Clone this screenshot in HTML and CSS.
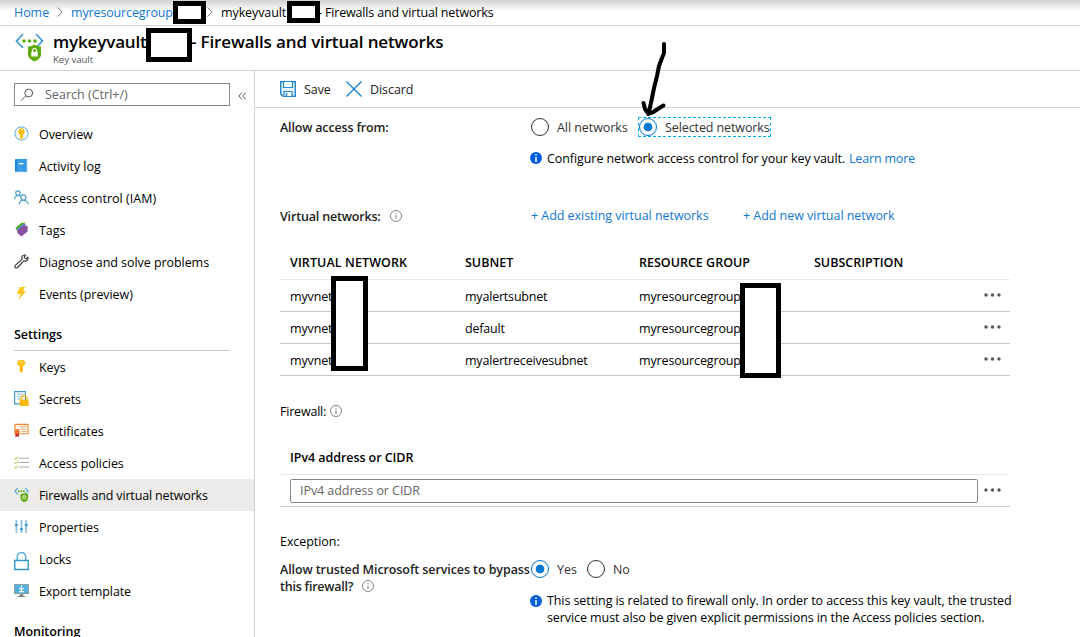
FILE: index.html
```html
<!DOCTYPE html>
<html lang="en">
<head>
<meta charset="utf-8">
<title>mykeyvault - Firewalls and virtual networks</title>
<link rel="stylesheet" href="styles.css">
</head>
<body>
<div class="page">
  <nav class="crumbs">
    <a class="crumb-home">Home</a>
    <svg class="chev" viewBox="0 0 6 10"><path d="M.7.5 5.2 5 .7 9.500"/></svg>
    <a class="crumb-group">myresourcegroup</a>
    <svg class="chev chev-two" viewBox="0 0 6 10"><path d="M.7.5 5.2 5 .7 9.500"/></svg>
    <span class="crumb-vault">mykeyvault</span>
    <span class="crumb-end">- Firewalls and virtual networks</span>
  </nav>
  <header class="head">
    <svg class="head-icon" viewBox="0 0 30 30"><path d="M8 1 1.500 8 8 15M21 1l6.500 7-6.500 7" fill="none" stroke="#3a9ad0" stroke-width="1.700"/><g fill="#5cab0b"><circle cx="9" cy="8" r="1.800"/><circle cx="14.500" cy="8" r="1.800"/><circle cx="20" cy="8" r="1.800"/><path d="M13 13.500q4 0 6.500-2 2.500 2 6.500 2v8q0 4-6.500 7-6.500-3-6.500-7z"/></g><path d="M17.500 19v-1.500a2 2 0 0 1 4 0V19" fill="none" stroke="#fff" stroke-width="1.200"/><path d="M16.300 18.800h6.400v4.700h-6.400z" fill="#fff"/></svg>
    <div>
      <h1 class="title"><span class="title-name">mykeyvault</span><span class="title-rest">- Firewalls and virtual networks</span></h1>
      <div class="subtitle">Key vault</div>
    </div>
  </header>
  <div class="body">
    <aside class="side">
      <div class="searchrow">
        <div class="search">
          <svg viewBox="0 0 14 14"><circle cx="8.700" cy="5" r="3.900"/><path d="M5.900 7.800 1 12.700"/></svg>
          <span class="t-search">Search (Ctrl+/)</span>
        </div>
        <svg class="collapse" viewBox="0 0 9 8"><path d="M4 .5.800 4 4 7.500M8 .5 4.800 4 8 7.500"/></svg>
      </div>
      <ul class="menu">
        <li><svg viewBox="0 0 16 16"><circle cx="8" cy="8" r="7" fill="#fff" stroke="#4da3d8"/><path d="M8 2a3.800 3.800 0 0 1 1.700 7V13L8 14.500 6.300 13V9A3.800 3.800 0 0 1 8 2z" fill="#fdbf12"/><path d="M7 3.800h2" stroke="#fff"/></svg><span class="t-overview">Overview</span></li>
        <li><svg viewBox="0 0 16 16"><path d="M2 1h12v14H2q-1-.2-1-1.500v-11Q1 1 2 1z" fill="#1f83d3"/><path d="M3 1h9.500v13H3z" fill="#359be6"/><path d="M13.500 1.500v13.200H2" fill="none" stroke="#9fd0ef" stroke-width=".8"/><path d="M5 6h5" stroke="#fff" stroke-width="1.500"/></svg><span class="t-activity">Activity log</span></li>
        <li><svg viewBox="0 0 16 16"><g fill="none" stroke="#4b9ec6" stroke-width="1.200"><circle cx="4.200" cy="3.300" r="2.400"/><path d="M.7 10q.2-4 3.500-4.200 1.800 0 2.500 1"/><circle cx="10" cy="8" r="2.800"/><path d="M5.500 15.500q.3-4.500 4.500-4.600 4.500.1 5 4.600"/></g></svg><span class="t-iam">Access control (IAM)</span></li>
        <li><svg viewBox="0 0 16 16"><path d="M1.500 6.500 8 .7h4.500L7 6.500 4 10z" fill="#57a51c"/><path d="M2.500 8 9.500 2H13L5 11z" fill="#45a5cb"/><path d="M3.500 8.500 10.500 3 14.500 4.500V10l-6.500 5.500L3.800 12z" fill="#8750a0"/></svg><span class="t-tags">Tags</span></li>
        <li><svg viewBox="0 0 16 16"><path d="M14.800 3.500 12.500 5.200 10.800 3.500 12.300 1.200Q9.700.5 8.700 2.500q-.8 1.500 0 3L1.400 12.100q-1.100 1.200 0 2.300 1.200 1.100 2.400 0l6.700-7.100q2 .7 3.500-.6 1.300-1.300.8-3.200z" fill="#fff" stroke="#333" stroke-width="1.200"/></svg><span class="t-diagnose">Diagnose and solve problems</span></li>
        <li><svg viewBox="0 0 16 16"><path d="M6 1h6L9.500 5.500H13L4.500 15 7 8.500H3z" fill="#fdc41c"/></svg><span class="t-events">Events (preview)</span></li>
      </ul>
      <h2 class="group"><span class="t-settings">Settings</span></h2>
      <ul class="menu">
        <li><svg viewBox="0 0 16 16"><path d="M7.700.7c3 0 4.800 1.500 4.300 4Q11.500 7 9.500 7.700V13L8 15 6.200 13.500V7.700Q3.800 7 3.300 4.500 3.500.9 7.700.7z" fill="#fdbf12"/><path d="M6 3.200h3.500" stroke="#fff1c0"/><path d="M7.500 8.500V13" stroke="#e99f08" stroke-width=".8"/></svg><span class="t-keys">Keys</span></li>
        <li><svg viewBox="0 0 16 16"><path d="M.7.700h11.500v13H.7z" fill="#fff" stroke="#3b97cb" stroke-width="1.200"/><path d="M3 3.500h7M3 6h7M3 8.500h5" stroke="#88bfdf"/><path d="M7.800 9V8a3 3 0 0 1 6 0v1" fill="none" stroke="#fdb813" stroke-width="1.400"/><path d="M6 9h9.700v7H6z" fill="#fdb813"/></svg><span class="t-secrets">Secrets</span></li>
        <li><svg viewBox="0 0 16 16"><path d="M1 1.500h14v10H1z" fill="#fff6ed" stroke="#ef8733" stroke-width="1.200"/><path d="M6 4h7M7 6.500h6M8 9h5" stroke="#eba66f"/><path d="M1.500 10.500h3.700V15L3.500 14l-2 1z" fill="#b8282b"/><circle cx="3.500" cy="9" r="2.600" fill="#ef772b"/></svg><span class="t-cert">Certificates</span></li>
        <li><svg viewBox="0 0 16 16"><path d="M5.500 3.500H16M5.500 8H16M5.500 12.800H16" stroke="#aaa" stroke-width="1.200"/><path d="m.5 3 1.300 1.400L4.500 1.800M.5 7.700l1.300 1.400 2.700-2.600M.5 12.500l1.300 1.400 2.700-2.600" fill="none" stroke="#bbd66b" stroke-width="1.200"/></svg><span class="t-policies">Access policies</span></li>
        <li class="active"><svg viewBox="0 0 16 16"><path d="M4 1 1 4.500 4 8M12 1l3 3.500L12 8" fill="none" stroke="#4ca4d4" stroke-width="1.200"/><g fill="#5cab0b"><circle cx="5.300" cy="4.500" r="1"/><circle cx="8" cy="4.500" r="1"/><circle cx="10.700" cy="4.500" r="1"/><path d="M7 7.500q2.500 0 4-1 1.500 1 4 1v4.700q0 2.400-4 4.100-4-1.700-4-4.100z"/></g><path d="M9.700 10.500v-.8a1.300 1.300 0 0 1 2.600 0v.8M9.300 10.500h3.400v2.300H9.300z" stroke="#fff" stroke-width=".7" fill="none"/></svg><span class="t-fw">Firewalls and virtual networks</span></li>
        <li><svg viewBox="0 0 16 16"><path d="M2.500 1v14M8 1v14M13 1v14" stroke="#8abfda" stroke-width="1.800"/><path d="M1 6.500h3M6.500 11h3M11.500 6.500h3" stroke="#3a99c9" stroke-width="2.200"/></svg><span class="t-prop">Properties</span></li>
        <li><svg class="tall" viewBox="0 0 16 20"><path d="M3.500 9V6.500Q3.500 1 8 1t4.500 5.500V9" fill="none" stroke="#5eb0da" stroke-width="1.700"/><path d="M.8 9.500h14.400v9.500H.8z" fill="#fff" stroke="#3296c8" stroke-width="1.500"/></svg><span class="t-locks">Locks</span></li>
        <li><svg viewBox="0 0 16 16"><path d="M0 1h16v10.800H0z" fill="#929ca3"/><path d="M1 2h14v8.700H1z" fill="#50b2df"/><path d="M8 2.500v5M5.800 5.500 8 7.700l2.200-2.200M5.500 9.200h5" stroke="#fff" fill="none" stroke-width="1.200"/><path d="M6 12h4v2h2.500v1h-9v-1H6z" fill="#7a7f83"/></svg><span class="t-export">Export template</span></li>
      </ul>
      <h2 class="group last"><span class="t-mon">Monitoring</span></h2>
    </aside>
    <main class="main">
      <div class="toolbar">
        <svg class="save" viewBox="0 0 16 16"><path d="M.7.700h14.600v14.600H3L.7 13z" fill="#e8f3fb" stroke="#2688d3" stroke-width="1.400"/><path d="M3.500 1v5.500h9V1M4 15v-4.500h8V15" fill="#fff" stroke="#2688d3" stroke-width="1.200"/><path d="M6.500 12v3" stroke="#2688d3" stroke-width="1.500"/></svg>
        <span class="t-save">Save</span>
        <svg class="discard" viewBox="0 0 16 16"><path d="m.5.500 15 15M15.500.5l-15 15" stroke="#0f7ed3" stroke-width="1.300"/></svg>
        <span class="t-discard">Discard</span>
      </div>
      <div class="row access">
        <div class="label"><b class="t-allow">Allow access from:</b></div>
        <div class="option"><i class="radio"></i><span class="t-all">All networks</span></div>
        <div class="option focus"><i class="radio on"></i><span class="t-sel">Selected networks</span></div>
      </div>
      <div class="row note">
        <svg class="info" viewBox="0 0 12 12"><circle cx="6" cy="6" r="6"/><path d="M6 2v1.800M6 5v5"/></svg>
        <span class="t-conf">Configure network access control for your key vault.</span><a class="t-learn">Learn more</a>
      </div>
      <div class="row vnets">
        <div class="label"><b class="t-vn">Virtual networks:</b><svg class="hint" viewBox="0 0 12 12"><circle cx="6" cy="6" r="5.500"/><path d="M6 3v1M6 5v4"/></svg></div>
        <a class="add-old">+ Add existing virtual networks</a><a class="add-new">+ Add new virtual network</a>
      </div>
      <div class="table">
        <div class="tr th"><span class="h-vn">VIRTUAL NETWORK</span><span class="h-sub">SUBNET</span><span class="h-rg">RESOURCE GROUP</span><span class="h-subs">SUBSCRIPTION</span></div>
        <div class="tr"><span class="c-vnet">myvnet</span><span class="c-alert">myalertsubnet</span><span class="c-rg">myresourcegroup</span><span></span><svg class="dots" viewBox="0 0 18 4"><circle cx="2" cy="2" r="1.700"/><circle cx="8.500" cy="2" r="1.700"/><circle cx="15" cy="2" r="1.700"/></svg></div>
        <div class="tr"><span class="c-vnet">myvnet</span><span class="c-def">default</span><span class="c-rg">myresourcegroup</span><span></span><svg class="dots" viewBox="0 0 18 4"><circle cx="2" cy="2" r="1.700"/><circle cx="8.500" cy="2" r="1.700"/><circle cx="15" cy="2" r="1.700"/></svg></div>
        <div class="tr"><span class="c-vnet">myvnet</span><span class="c-recv">myalertreceivesubnet</span><span class="c-rg">myresourcegroup</span><span></span><svg class="dots" viewBox="0 0 18 4"><circle cx="2" cy="2" r="1.700"/><circle cx="8.500" cy="2" r="1.700"/><circle cx="15" cy="2" r="1.700"/></svg></div>
      </div>
      <div class="row firewall"><span class="t-firewall">Firewall:</span><svg class="hint" viewBox="0 0 12 12"><circle cx="6" cy="6" r="5.500"/><path d="M6 3v1M6 5v4"/></svg></div>
      <div class="ip-head"><b class="t-ip">IPv4 address or CIDR</b></div>
      <div class="ip-row">
        <div class="ip-input"><span class="t-iph">IPv4 address or CIDR</span></div>
        <svg class="dots" viewBox="0 0 18 4"><circle cx="2" cy="2" r="1.700"/><circle cx="8.500" cy="2" r="1.700"/><circle cx="15" cy="2" r="1.700"/></svg>
      </div>
      <div class="row exception"><span class="t-exc">Exception:</span></div>
      <div class="bypass">
        <div class="label two"><b class="t-by1">Allow trusted Microsoft services to bypass</b><br><b class="t-by2">this firewall?</b><svg class="hint" viewBox="0 0 12 12"><circle cx="6" cy="6" r="5.500"/><path d="M6 3v1M6 5v4"/></svg></div>
        <div class="option yes"><i class="radio on"></i><span class="t-yes">Yes</span></div>
        <div class="option"><i class="radio"></i><span class="t-no">No</span></div>
      </div>
      <div class="note2">
        <svg class="info" viewBox="0 0 12 12"><circle cx="6" cy="6" r="6"/><path d="M6 2v1.800M6 5v5"/></svg>
        <div><span class="t-n1">This setting is related to firewall only. In order to access this key vault, the trusted</span><br><span class="t-n2">service must also be given explicit permissions in the Access policies section.</span></div>
      </div>
    </main>
  </div>
  <i class="mask mask-crumb-a"></i><i class="mask mask-crumb-b"></i><i class="mask mask-title"></i><i class="mask mask-vnet"></i><i class="mask mask-rg"></i>
  <svg class="arrow" viewBox="0 0 30 80"><path d="M24 6v9l-2 5-3 8-2 10-3 12-2 10-3 14M3.500 65l1.500 6 3.500 5 4-1.500 6-4 5-3"/></svg>
</div>
</body>
</html>
```
FILE: styles.css
```css
* { box-sizing: border-box; }
body { margin: 0; background: #fff; color: #000; font: 12.5px/17px "Open Sans", "Noto Sans", sans-serif; letter-spacing: -.06px; }
.page { position: relative; width: 1080px; height: 637px; overflow: hidden; display: flex; flex-direction: column; }
.page span, .page b, .page a { white-space: nowrap; }
svg { flex: none; display: block; }
a { color: #0f78d4; }
b { font-weight: 600; color: #222; }
h1, h2, ul { margin: 0; padding: 0; }

.crumbs { height: 26px; flex: none; display: flex; align-items: center; padding: 0 0 1px 14px; border-bottom: 1px solid #d2d2d2; background: linear-gradient(#d2d2d2, #fff 11px); }
.crumb-home { width: 43px; }
.chev { width: 6px; height: 10px; fill: none; stroke: #777; margin-right: 8px; }
.crumb-group { width: 136px; letter-spacing: -.14px; }
.chev-two { margin-right: 8px; }
.crumb-vault { width: 97px; letter-spacing: -.1px; }
.crumb-end { letter-spacing: -.16px; }

.head { height: 45px; flex: none; display: flex; border-bottom: 1px solid #d2d2d2; padding: 7px 0 0 15px; }
.head-icon { width: 30px; height: 30px; margin-right: 8px; }
.title { font-size: 17px; line-height: 18px; font-weight: 600; display: flex; }
.title-name { width: 138px; letter-spacing: -.15px; }
.title-rest { letter-spacing: -.14px; }
.subtitle { font-size: 9.700px; line-height: 14px; color: #555; margin-top: 2px; letter-spacing: -.08px; }

.body { flex: 1; display: flex; min-height: 0; }
.side { width: 255px; flex: none; border-right: 1px solid #d2d2d2; padding-top: 12px; overflow: hidden; }
.searchrow { display: flex; align-items: center; padding-left: 14px; margin-bottom: 12px; }
.search { width: 216px; height: 23px; border: 1px solid #868686; display: flex; align-items: center; color: #666; }
.t-search { letter-spacing: .02px; }
.search svg { width: 14px; height: 14px; margin: 0 11px 0 5px; fill: none; stroke: #555; }
.collapse { width: 9px; height: 8px; margin: 2px 0 0 8px; fill: none; stroke: #555; }
.menu { list-style: none; }
.menu li { height: 32px; display: flex; align-items: center; padding-left: 14px; }
.menu svg { width: 15px; height: 15px; margin: 0 10px 1px 0; }
.menu svg.tall { height: 20px; margin-top: 4px; margin-bottom: 0; }
.active { background: #edebe9; }
.t-fw { letter-spacing: -.15px; }
.t-iam { letter-spacing: .02px; }
.t-export { letter-spacing: -.12px; }
.group { font-size: 12.5px; line-height: 17px; font-weight: 600; margin: 0 24px 0 14px; height: 41px; padding-top: 16px; border-bottom: 1px solid #c8c8c8; }

.main { flex: 1; min-width: 0; }
.toolbar { height: 37px; border-bottom: 1px solid #d2d2d2; display: flex; align-items: center; padding-left: 25px; color: #222; }
.save { width: 16px; height: 16px; margin-right: 8px; }
.t-save { width: 42px; }
.discard { width: 16px; height: 16px; margin-right: 8px; }
.row { display: flex; align-items: center; height: 20px; padding-left: 25px; }
.label { width: 250px; flex: none; display: flex; align-items: center; }
.access { margin-top: 9px; }
.t-allow, .t-vn { letter-spacing: -.17px; }
.option { display: flex; align-items: center; height: 20px; color: #333; width: 108px; padding-left: 1px; }
.focus { width: 133px; outline: 1px dashed #00b0f0; outline-offset: -1px; }
.radio { width: 18px; height: 18px; flex: none; border: 1px solid #333; border-radius: 50%; margin-right: 8px; display: block; }
.on { border-color: #0078d4; background: radial-gradient(circle, #0078d4 4px, #fff 4.700px); }
.t-sel { letter-spacing: -.1px; }
.note { margin-top: 11px; padding-left: 275px; }
.info { width: 12px; height: 12px; margin-right: 5px; fill: #015cda; stroke: #fff; stroke-width: 1.500; }
.info circle { stroke: none; }
.t-conf { width: 302px; letter-spacing: -.075px; }
.t-learn { letter-spacing: -.18px; }
.vnets { margin-top: 38px; height: 18px; }
.t-vn { padding-top: 2px; }
.hint { width: 12px; height: 12px; fill: none; stroke: #777; stroke-width: .9; margin-left: 9px; }
.vnets .hint { margin-top: 1px; }
.add-old { width: 212px; margin-left: 1px; }
.add-old, .add-new { letter-spacing: -.04px; }
.table { width: 730px; margin: 20px 0 0 25px; }
.tr { height: 32px; border-bottom: 1px solid #c8c8c8; display: grid; grid-template-columns: 175px 174px 175px 169.500px 18px; align-items: center; padding-left: 10px; }
.th { height: 36px; border-color: #eaeaea; font-weight: 600; letter-spacing: 0; }
.h-vn { letter-spacing: .1px; }
.tr span { padding-top: 1px; }
.c-vnet, .c-rg { letter-spacing: -.14px; }
.c-alert, .c-recv, .c-def { letter-spacing: -.2px; }
.dots { width: 18px; height: 4px; fill: #555; }
.tr .dots { margin-top: -1px; }
.firewall { margin-top: 25px; }
.t-firewall { letter-spacing: -.2px; }
.firewall .hint { margin-left: 4px; }
.ip-head { width: 730px; margin: 26px 0 0 25px; height: 28px; border-bottom: 1px solid #eaeaea; padding: 2px 0 0 10px; }
.ip-head b { color: #000; }
.ip-row { width: 730px; height: 32px; margin-left: 25px; padding: 1px 0 0 10px; border-bottom: 1px solid #c8c8c8; display: flex; align-items: center; }
.ip-input { width: 688px; height: 24px; border: 1px solid #868686; border-radius: 2px; padding: 2px 0 0 9px; color: #666; margin-right: 5.500px; }
.ip-row .dots { margin-top: -2px; }
.exception { margin-top: 24px; }
.bypass { display: flex; padding-left: 25px; margin-top: 8px; height: 34px; }
.label.two { display: block; padding-top: 2px; }
.t-by1 { letter-spacing: -.09px; }
.t-by2 { letter-spacing: -.22px; }
.two .hint { display: inline-block; vertical-align: -1px; }
.yes { width: 56px; }
.note2 { display: flex; padding-left: 275px; margin-top: -1px; }
.note2 .info { margin-top: 3px; }
.t-n1 { letter-spacing: -.088px; }
.t-n2 { letter-spacing: -.085px; }

.mask { position: absolute; border: 5px solid #000; background: #fff; }
.mask-crumb-a { left: 173px; top: 1px; width: 33px; height: 23px; }
.mask-crumb-b { left: 287px; top: 1px; width: 33px; height: 22px; }
.mask-title { left: 146px; top: 28px; width: 46px; height: 34px; }
.mask-vnet { left: 331px; top: 276px; width: 37px; height: 95px; }
.mask-rg { left: 740px; top: 283px; width: 41px; height: 95px; }
.arrow { position: absolute; left: 640px; top: 38px; width: 30px; height: 80px; fill: none; stroke: #000; stroke-width: 4; stroke-linecap: round; stroke-linejoin: round; }
```
